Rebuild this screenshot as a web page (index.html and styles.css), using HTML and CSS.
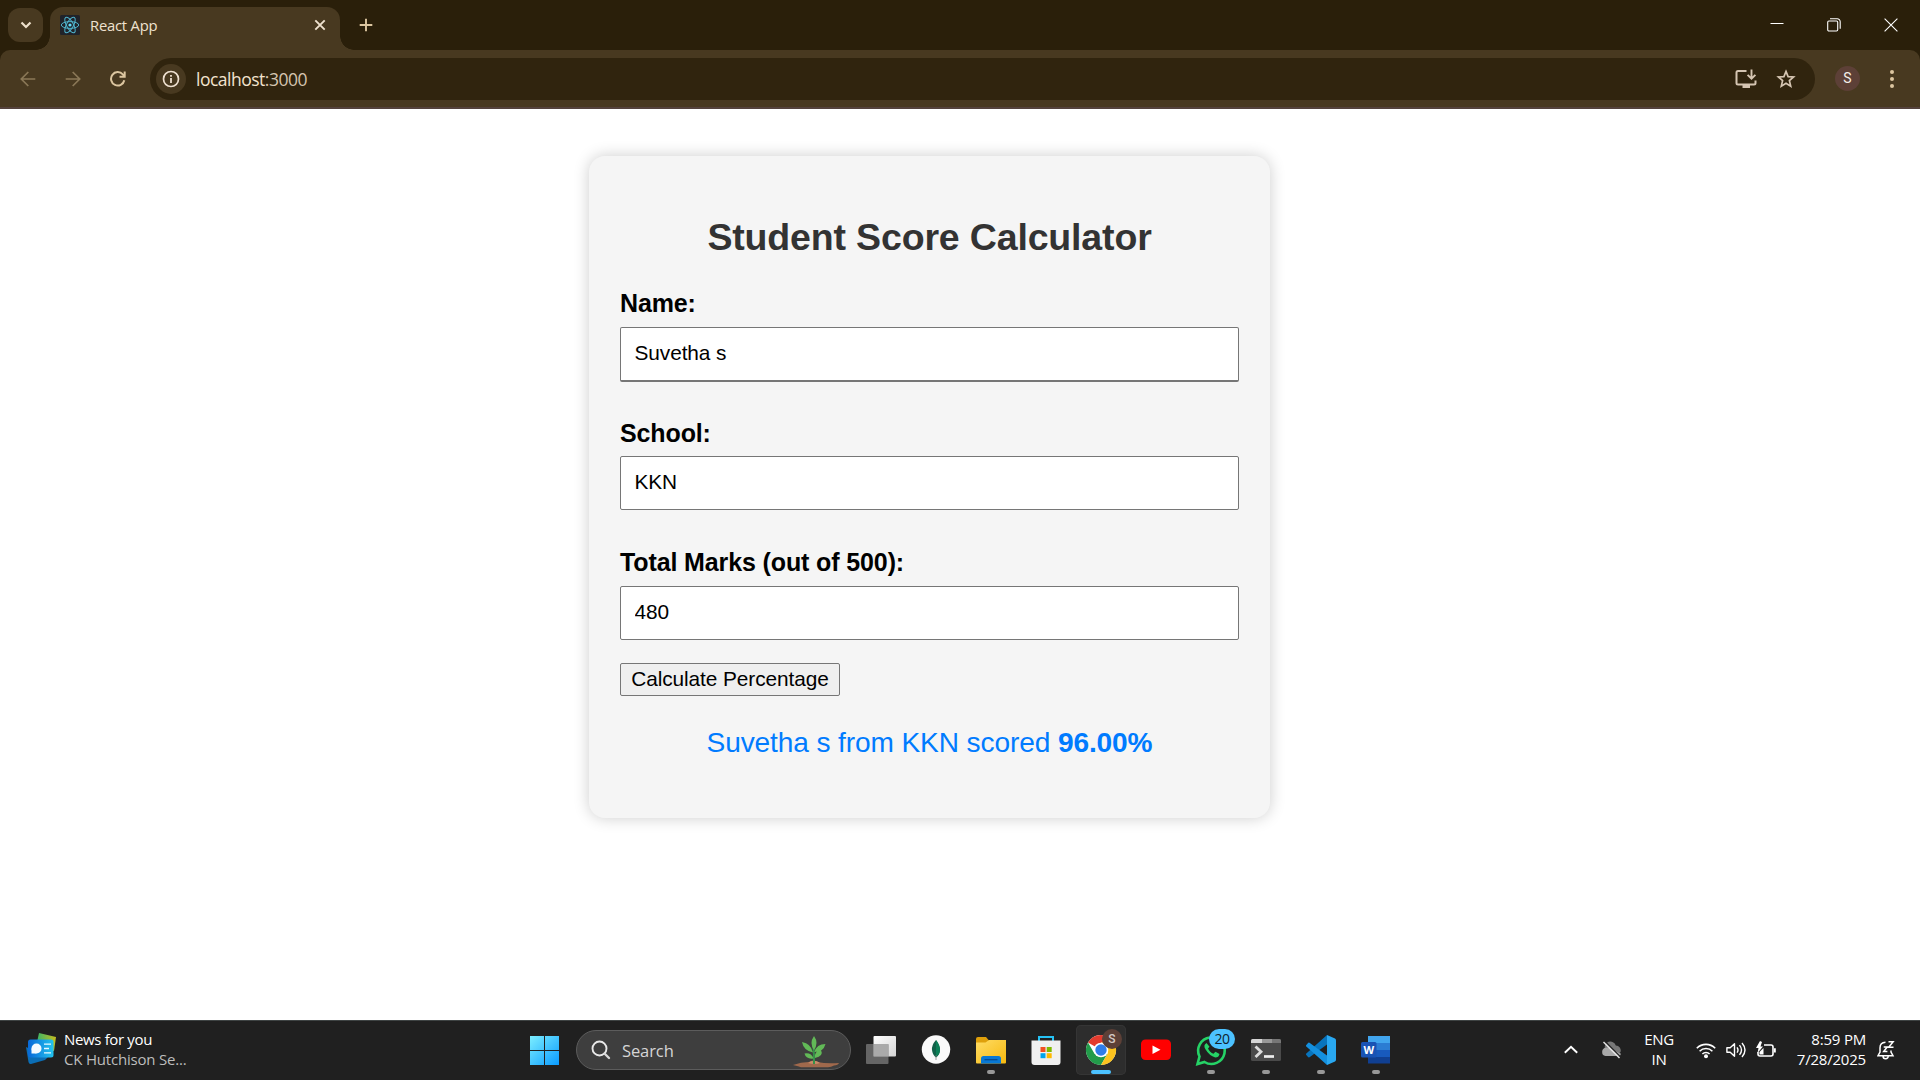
FILE: index.html
```html
<!DOCTYPE html>
<html lang="en">
<head>
<meta charset="utf-8">
<title>React App</title>
<link rel="stylesheet" href="styles.css">
</head>
<body>
<div class="screen">
  <header class="tabstrip">
    <button class="tab-search" aria-label="Search tabs"><svg width="35" height="34" viewBox="0 0 35 34"><path d="M13.5 14.5l4.5 4.5 4.5-4.5" fill="none" stroke="#eee0cb" stroke-width="2.2"/></svg></button>
    <div class="tab">
      <svg class="favicon" width="20" height="20" viewBox="0 0 20 20"><rect width="20" height="20" rx="1.5" fill="#20232a"/><g fill="none" stroke="#4fb3cc" stroke-width="1"><ellipse cx="10" cy="10" rx="8.7" ry="3.4"/><ellipse cx="10" cy="10" rx="8.7" ry="3.4" transform="rotate(60 10 10)"/><ellipse cx="10" cy="10" rx="8.7" ry="3.4" transform="rotate(120 10 10)"/></g><circle cx="10" cy="10" r="1.6" fill="#61dafb"/></svg>
      <span class="tab-title">React App</span>
      <svg class="tab-close" width="12" height="12" viewBox="0 0 12 12"><path d="M1.3 1.3l9.4 9.4M10.7 1.3l-9.4 9.4" stroke="#efe2cf" stroke-width="1.9"/></svg>
    </div>
    <svg class="new-tab" width="14" height="14" viewBox="0 0 14 14"><path d="M7 .7v12.6M.7 7h12.6" stroke="#dcc6a0" stroke-width="1.9"/></svg>
    <div class="window-controls">
      <svg width="14" height="14" viewBox="0 0 14 14"><path d="M.5 5.500h13" stroke="#fff" stroke-width="1"/></svg>
      <svg width="14" height="14" viewBox="0 0 14 14"><g fill="none" stroke="#fff" stroke-width="1.1"><rect x=".7" y="3" width="10" height="10" rx="1.2"/><path d="M3 .8h7.200a3 3 0 0 1 3 3v7"/></g></svg>
      <svg width="14" height="14" viewBox="0 0 14 14"><path d="M.6.6l12.800 12.800M13.400.6L.6 13.400" stroke="#fff" stroke-width="1.1"/></svg>
    </div>
  </header>
  <nav class="toolbar">
    <svg class="nav-icon" width="16" height="16" viewBox="0 0 16 16"><path d="M15.300 8H1.500M8.300 1L1.300 8l7 7" fill="none" stroke="#8a7857" stroke-width="1.7"/></svg>
    <svg class="nav-icon" width="16" height="16" viewBox="0 0 16 16"><path d="M.7 8h13.800M7.700 1l7 7-7 7" fill="none" stroke="#8a7857" stroke-width="1.7"/></svg>
    <svg class="nav-icon" width="16" height="16" viewBox="0 0 16 16"><path d="M14.300 9.200A6.700 6.700 0 1 1 12.800 3.400L14.300 5M14.700.5V5.700H9.500" fill="none" stroke="#dcc6a0" stroke-width="2"/></svg>
    <div class="omnibox">
      <span class="site-info"><svg width="18" height="18" viewBox="0 0 18 18"><circle cx="9" cy="9" r="7.500" fill="none" stroke="#eee0d0" stroke-width="1.700"/><path d="M9 8v5M9 4.900v1.900" stroke="#eee0d0" stroke-width="1.800"/></svg></span>
      <span class="url">localhost<span class="port">:3000</span></span>
      <svg class="install" width="22" height="20" viewBox="0 0 22 20"><path d="M11.500 2H3Q1.500 2 1.500 3.500V14q0 1.500 1.500 1.500h16q1.500 0 1.500-1.500V11.500" fill="none" stroke="#d5c5b2" stroke-width="2"/><path d="M7.500 15.500h7.500V19H7.500z" fill="#d5c5b2"/><path d="M16.500.5V9M12.600 5.800l3.900 3.900 3.900-3.900" fill="none" stroke="#d5c5b2" stroke-width="1.900"/></svg>
      <svg class="star" width="20" height="20" viewBox="0 0 20 20"><path d="M10 2.400l2.100 5.200 5.500.4-4.200 3.600 1.300 5.500L10 14.200l-4.700 2.900 1.300-5.500L2.400 8l5.500-.4z" fill="none" stroke="#d5c5b2" stroke-width="1.700"/></svg>
    </div>
    <span class="avatar">S</span>
    <svg class="menu" width="6" height="20" viewBox="0 0 6 20"><g fill="#dcc6a0"><circle cx="3" cy="3" r="2"/><circle cx="3" cy="10" r="2"/><circle cx="3" cy="17" r="2"/></g></svg>
  </nav>

  <main class="page">
    <section class="card">
      <h2 class="heading">Student Score Calculator</h2>
      <label class="label" for="name">Name:</label>
      <input class="input input-name" id="name" type="text" value="Suvetha s">
      <label class="label" for="school">School:</label>
      <input class="input" id="school" type="text" value="KKN">
      <label class="label" for="marks">Total Marks (out of 500):</label>
      <input class="input input-marks" id="marks" type="text" value="480">
      <button class="calculate">Calculate Percentage</button>
      <p class="result">Suvetha s from KKN scored <strong>96.00%</strong></p>
    </section>
  </main>

  <footer class="taskbar">
    <div class="widgets">
      <svg width="30" height="32" viewBox="0 0 30 32"><defs><linearGradient id="wg" x1="0" x2="1"><stop offset="0" stop-color="#35b56b"/><stop offset="1" stop-color="#c5bd20"/></linearGradient><linearGradient id="wb" x1="0" x2="1"><stop offset="0" stop-color="#0868d8"/><stop offset="1" stop-color="#23c3ee"/></linearGradient></defs><path d="M13 0l17 4-2 14-18-4z" fill="url(#wg)"/><path d="M0 14l22 10-3 3-14 4q-2 .4-2.500-2z" fill="#0b6eb5"/><rect x="2" y="6.500" width="25.500" height="18" rx="2.500" fill="url(#wb)"/><circle cx="10.500" cy="15.500" r="5" fill="#f4fbff"/><path d="M5.500 15.500v5h5z" fill="#f4fbff"/><path d="M18 11.200h7M18 15.500h5M18 19.800h7" stroke="#e8faff" stroke-width="1.300"/></svg>
      <div class="news"><span>News for you</span><span class="news-sub">CK Hutchison Se...</span></div>
    </div>
    <div class="apps">
      <svg width="50" height="50" viewBox="0 0 50 50"><defs><linearGradient id="win" x1="11" y1="11" x2="40" y2="40" gradientUnits="userSpaceOnUse"><stop offset="0" stop-color="#7ceeff"/><stop offset="1" stop-color="#0a9bff"/></linearGradient></defs><path d="M11 11h14v14H11zM26 11h14v14H26zM11 26h14v14H11zM26 26h14v14H26z" fill="url(#win)"/></svg>
      <div class="search">
        <svg width="20" height="20" viewBox="0 0 20 20"><circle cx="8.500" cy="8.500" r="7" fill="none" stroke="#e8e8e8" stroke-width="1.900"/><path d="M13.500 13.500l4.500 4.500" stroke="#d8d8d8" stroke-width="2.400" stroke-linecap="round"/></svg>
        <span class="search-text">Search</span>
        <svg class="plant" width="48" height="34" viewBox="0 0 48 34"><path d="M1 30q8-3 16-3 4-3 8 0 10 2 22 1-1 2-5 2.500-3 1.500-6 1.800H9l-3-1z" fill="#a0694c"/><path d="M16 28q6-4.500 12 0-5 2-12 0z" fill="#c98b68"/><path d="M22 29q0-12-.5-18" stroke="#35914a" stroke-width="2" fill="none"/><path d="M22 15q-5-7 0-14 5 7 0 14zM21 17.500q-9.500-2-11-10.500 9 1.500 11 10.500zM22.500 17q2-8 11-8-2 8-11 8zM21.500 23.500q-7.500 1-9-5 7-1 9 5zM23 23q-1-7 6-8 3 6-6 8z" fill="#62b957"/></svg>
      </div>
      <svg width="50" height="50" viewBox="0 0 50 50"><defs><linearGradient id="tv" x1="0" y1="0" x2="1" y2="1"><stop offset="0" stop-color="#fff"/><stop offset="1" stop-color="#d4d4d4"/></linearGradient></defs><rect x="17.500" y="11" width="22.500" height="20.500" rx="1" fill="url(#tv)"/><rect x="10" y="19" width="22.500" height="20" rx="1" fill="#777" fill-opacity=".8"/><path d="M17.500 19h15v12.500h-15z" fill="#aaa"/></svg>
      <svg width="50" height="50" viewBox="0 0 50 50"><circle cx="25" cy="24.500" r="14.200" fill="#fafafa"/><path d="M25 15q-4.500 5-4 10t4 7.500q4-3 4-7.500t-4-10z" fill="#116149"/><path d="M25 15v17q4-3 4-7.500t-4-9.500z" fill="#0b8057"/><path d="M25 30v5" stroke="#777" stroke-width=".7"/></svg>
      <div class="app"><svg width="50" height="50" viewBox="0 0 50 50"><defs><linearGradient id="fd" x1="0" y1="0" x2="1" y2="1"><stop offset="0" stop-color="#ffdc65"/><stop offset="1" stop-color="#f6b90e"/></linearGradient></defs><path d="M10 14q0-2 2-2h8l3 3.500L20 20H10z" fill="#dfa00b"/><path d="M10 17.500h9.500l3.500-2.500h17v22.500q0 1-1 1H11q-1 0-1-1z" fill="url(#fd)"/><path d="M15 38.500V33.500q0-2.500 2.500-2.500h15q2.500 0 2.500 2.500v5z" fill="#0878d4"/><path d="M18.500 34.700h13" stroke="#064a91" stroke-width="1.300"/></svg><i class="dot"></i></div>
      <svg width="50" height="50" viewBox="0 0 50 50"><path d="M18 17v-5h14v5" fill="none" stroke="#25c2f5" stroke-width="2"/><path d="M10.500 15.500h29V37q0 3-3 3h-23q-3 0-3-3z" fill="#f0f0f0"/><path d="M19.500 22h5v5h-5z" fill="#f25022"/><path d="M25.700 22h5v5h-5z" fill="#7fba00"/><path d="M19.500 28.200h5v5h-5z" fill="#00a4ef"/><path d="M25.700 28.200h5v5h-5z" fill="#ffb900"/></svg>
      <div class="app app-active"><svg width="50" height="50" viewBox="0 0 50 50"><circle cx="25" cy="25" r="15" fill="#fff"/><path d="M25 25L12 17.500A15 15 0 0 1 38 17.500H25z" fill="#e33b2e"/><path d="M12 17.500A15 15 0 0 0 25 40l6.500-11.250L25 25l-6.500 3.750z" fill="#229b4a"/><path d="M38 17.500A15 15 0 0 1 25 40l6.500-11.250Q33 22 25 17.500z" fill="#fcc31e"/><circle cx="25" cy="25" r="7.300" fill="#fff"/><circle cx="25" cy="25" r="5.700" fill="#2f7de9"/></svg><span class="profile-badge">S</span><i class="dot dot-active"></i></div>
      <svg width="50" height="50" viewBox="0 0 50 50"><rect x="10" y="14.500" width="30" height="20.500" rx="4.500" fill="#f00"/><path d="M21.500 20.500v8.500l8-4.250z" fill="#fff"/></svg>
      <div class="app"><svg width="50" height="50" viewBox="0 0 50 50"><path d="M11.500 39l2-7.500A13.300 13.300 0 1 1 18.500 37z" fill="none" stroke="#25d366" stroke-width="2.600"/><path d="M20.500 18q-3.500 2-1.200 6 4 6.800 10 8.500 3.500 0 4.200-3.500l-4-2.200-2 2q-3.700-1.200-5.500-5.300l1.500-1.700z" fill="#25d366"/></svg><span class="count-badge">20</span><i class="dot"></i></div>
      <div class="app"><svg width="50" height="50" viewBox="0 0 50 50"><rect x="10" y="14" width="30" height="22" rx="1.500" fill="#4a4a4a"/><path d="M10 18v-2.500q0-1.500 1.500-1.500H21v4z" fill="#d5d5d5"/><path d="M21 14h10v4H21z" fill="#999"/><path d="M31 14h7.500q1.500 0 1.500 1.500V18h-9z" fill="#777"/><path d="M14.500 21.500l5.500 5.300-5.500 5.300" fill="none" stroke="#dcdcdc" stroke-width="2.800"/><path d="M23 31.500h10" stroke="#eee" stroke-width="2.700"/></svg><i class="dot"></i></div>
      <div class="app"><svg width="50" height="50" viewBox="0 0 50 50"><path d="M10.300 28.500L31 10l2 8-19.500 14.300q-1 .4-1.700-.5l-1.700-2q-.4-.8.200-1.300z" fill="#0874bd"/><path d="M10.300 21.500L31 40l2-8-19.500-14.300q-1-.4-1.700.5l-1.700 2q-.4.8.2 1.300z" fill="#1490df"/><path d="M31 10l8 3.500q1 .5 1 1.800v19.400q0 1.300-1 1.800L31 40z" fill="#29a8f1"/></svg><i class="dot"></i></div>
      <div class="app"><svg width="50" height="50" viewBox="0 0 50 50"><path d="M17 11h22v7H17z" fill="#41a5ee"/><path d="M17 18h22v7H17z" fill="#2b7cd3"/><path d="M17 25h22v7H17z" fill="#185abd"/><path d="M17 32h22v6.500H17z" fill="#103f91"/><rect x="10" y="17" width="15.500" height="15.500" rx="1.500" fill="#1953b4"/><text class="word-letter" x="17.700" y="29" text-anchor="middle">W</text></svg><i class="dot"></i></div>
    </div>
    <div class="tray">
      <svg class="tray-up" width="14" height="9" viewBox="0 0 14 9"><path d="M.8 7.800L7 1.800l6.200 6" fill="none" stroke="#fff" stroke-width="1.900"/></svg>
      <svg class="tray-cloud" width="20" height="18" viewBox="0 0 20 18"><path d="M4 8a5.500 5.500 0 0 1 10.800-3.500A5 5 0 0 1 19.500 11l-3 3z" fill="#777"/><path d="M4.500 15A4.200 4.200 0 0 1 5 6.700q3-.7 6 2l9 4q-.5 2.500-3 2.300z" fill="#a8a8a8"/><path d="M3.700 0l16 16" stroke="#222" stroke-width="1.300"/><path d="M2.500 1l16 16" stroke="#e6e6e6" stroke-width="1.500"/></svg>
      <div class="lang"><span>ENG</span><span>IN</span></div>
      <div class="status">
        <svg width="20" height="18" viewBox="0 0 20 18"><g fill="none" stroke="#fff" stroke-width="1.600"><path d="M.8 7.200a13 13 0 0 1 18.400 0M3.600 10.200a9 9 0 0 1 12.800 0M6.400 13a5.100 5.100 0 0 1 7.200 0"/></g><circle cx="10" cy="15.200" r="2" fill="#fff"/></svg>
        <svg width="20" height="18" viewBox="0 0 20 18"><g fill="none" stroke="#fff" stroke-width="1.400"><path d="M.9 6.800h3.300L8.500 2.700v12.600l-4.300-4.100H.9z" stroke-linejoin="round"/><path d="M11 6.300q2 2.700 0 5.400M13.500 4.100q4 4.900 0 9.800M16 2q6 7 0 14"/></g></svg>
        <svg width="20" height="18" viewBox="0 0 20 18"><path d="M8 4h7q2 0 2 2v7q0 2-2 2H4q-2 0-2-2v-2" fill="none" stroke="#fff" stroke-width="1.600"/><path d="M18 7.300h1.800v4.200H18zM4 0L0 7h2.500L1.500 12 7 5.500H4.500L6 1zM3.500 13.500V11L7.500 7v6.500z" fill="#fff"/></svg>
      </div>
      <div class="clock"><span>8:59 PM</span><span>7/28/2025</span></div>
      <svg class="bell" width="18" height="20" viewBox="0 0 18 20"><path d="M8.500 2.300Q3 2.500 3 8v4L1 15.700h15L14 12v-1.500M6 16q0 2.800 2.600 2.800T11.200 16" fill="none" stroke="#fff" stroke-width="1.500"/><path d="M11.500 1.700h4.600L11.700 7.200h4.800M6.700 7h3.500l-3.500 4.500h3.700" fill="none" stroke="#fff" stroke-width="1.500"/></svg>
    </div>
  </footer>
</div>
</body>
</html>
```

FILE: styles.css
```css
* { box-sizing: border-box; }

body {
  margin: 0;
  background: #fff;
  font-family: "Liberation Sans", Arial, sans-serif;
}

svg { display: block; flex: none; }

.screen {
  display: flex;
  flex-direction: column;
  width: 1920px;
  height: 1080px;
  overflow: hidden;
  background: #2a1f0a;
}

/* Browser chrome */
.tabstrip,
.toolbar,
.taskbar {
  font-family: "Open Sans", "Noto Sans", sans-serif;
}

.tabstrip {
  display: flex;
  align-items: flex-start;
  height: 50px;
  background: #2a1f0a;
  flex: none;
}

.tab-search {
  width: 35px;
  height: 34px;
  margin: 8px 0 0 8px;
  padding: 0;
  border: 0;
  border-radius: 12px;
  background: #483920;
}

.tab {
  position: relative;
  display: flex;
  align-items: center;
  width: 290px;
  height: 43px;
  margin: 7px 0 0 7px;
  padding: 0 14px 7px 10px;
  border-radius: 13px 13px 0 0;
  background: #483920;
}

.tab::before,
.tab::after {
  content: "";
  position: absolute;
  bottom: 0;
  width: 14px;
  height: 14px;
}

.tab::before {
  left: -14px;
  background: radial-gradient(circle at 0 0, transparent 13.5px, #483920 14px);
}

.tab::after {
  right: -14px;
  background: radial-gradient(circle at 100% 0, transparent 13.5px, #483920 14px);
}

.tab-title {
  margin-left: 10px;
  color: #efe2cf;
  font-size: 14.8px;
  line-height: 20px;
  letter-spacing: -0.22px;
}

.tab-close { margin-left: auto; }

.new-tab { margin: 18px 0 0 19px; }

.window-controls {
  display: flex;
  gap: 43px;
  margin: 18px 22px 0 auto;
}

.toolbar {
  display: flex;
  align-items: center;
  height: 59px;
  padding: 1px 25px 0 20px;
  border-bottom: 2px solid #54423c;
  border-radius: 10px 10px 0 0;
  background: #483920;
  flex: none;
}

.nav-icon { margin: 0 29px 1px 0; }

.omnibox {
  display: flex;
  align-items: center;
  width: 1665px;
  height: 42px;
  margin-left: -5px;
  padding: 0 19px 0 6px;
  border-radius: 21px;
  background: #30240e;
}

.site-info {
  display: grid;
  place-items: center;
  width: 30px;
  height: 30px;
  border-radius: 50%;
  background: #483920;
}

.url {
  margin-left: 10px;
  padding-bottom: 1px;
  color: #f3e3ce;
  font-size: 17.5px;
  line-height: 24px;
  letter-spacing: -0.5px;
}

.port { color: #d5c5b0; }

.install { margin-left: auto; }

.star { margin-left: 19px; }

.avatar {
  width: 25px;
  height: 25px;
  margin: 0 0 1px 20px;
  border-radius: 50%;
  background: #5d4037;
  color: #f5eee9;
  font: 14px/25px Roboto, sans-serif;
  text-align: center;
}

.menu { margin: 0 0 1px auto; }

.page {
  flex: 1;
  min-height: 0;
  background: #fff;
}

/* Calculator */
.card {
  display: flex;
  flex-direction: column;
  align-items: flex-start;
  width: 681px;
  height: 662px;
  margin: 47px 0 0 589px;
  padding: 59px 31px 0;
  border-radius: 16px;
  background: #f5f5f5;
  box-shadow: 0 0 16px rgba(0, 0, 0, 0.2);
}

.heading {
  align-self: stretch;
  margin: 0 0 30px;
  color: #333;
  font-size: 37.5px;
  line-height: 44px;
  letter-spacing: -0.16px;
  text-align: center;
}

.label {
  font-size: 25px;
  font-weight: bold;
  line-height: 29px;
  letter-spacing: -0.12px;
}

.input {
  width: 619px;
  height: 54px;
  margin: 8px 0 38px;
  padding: 0 14px 2px 13.5px;
  border: 1px solid #767676;
  border-radius: 2px;
  background: #fff;
  color: #000;
  font: 20.83px "Liberation Sans", Arial, sans-serif;
  letter-spacing: -0.08px;
}

.input-name {
  height: 55px;
  margin: 9px 0 37px;
  border-bottom-width: 2px;
}

.input-marks { margin-top: 9px; }

.calculate {
  width: 220px;
  height: 33px;
  margin-top: -15px;
  padding: 0 0 1px;
  border: 1px solid #767676;
  border-radius: 2px;
  background: #efefef;
  color: #000;
  font: 20.83px "Liberation Sans", Arial, sans-serif;
  letter-spacing: -0.08px;
  white-space: nowrap;
}

.result {
  align-self: stretch;
  margin: 31px 0 0;
  color: #007bff;
  font-size: 28.1px;
  line-height: 32px;
  letter-spacing: -0.12px;
  text-align: center;
}

/* Taskbar */
.taskbar {
  display: grid;
  grid-template-columns: 519px auto 1fr;
  height: 60px;
  border-top: 1px solid #3e4343;
  background: #202020;
  color: #fff;
  font-size: 15px;
  line-height: 20px;
  flex: none;
}

.widgets {
  display: flex;
  align-items: center;
  gap: 8px;
  padding: 0 0 3px 26px;
}

.news,
.lang,
.clock {
  display: flex;
  flex-direction: column;
  margin-bottom: 1px;
  letter-spacing: -0.35px;
}

.news-sub {
  color: #bdbdbd;
  letter-spacing: -0.2px;
}

.apps {
  display: flex;
  align-items: center;
  gap: 5px;
  padding-bottom: 1px;
}

.search {
  display: flex;
  align-items: center;
  width: 275px;
  height: 40px;
  margin-left: 2px;
  padding: 0 10px 0 14px;
  border: 1px solid #5c5c5c;
  border-radius: 20px;
  background: #3e3e3e;
}

.search-text {
  margin-left: 11px;
  padding-top: 1px;
  color: #d5d5d5;
  font-size: 16.5px;
  letter-spacing: -0.1px;
}

.plant {
  align-self: flex-end;
  margin-left: auto;
}

.app {
  position: relative;
  width: 50px;
  height: 50px;
}

.app-active {
  border-radius: 5px;
  background: #2d2d2d;
  box-shadow: inset 0 0 0 1px #353535;
}

.dot {
  position: absolute;
  bottom: 1px;
  left: 21px;
  width: 8px;
  height: 4px;
  border-radius: 2px;
  background: #989898;
}

.dot-active {
  left: 15px;
  width: 20px;
  background: #4cc2ff;
}

.profile-badge,
.count-badge {
  position: absolute;
  display: grid;
  place-items: center;
}

.profile-badge {
  top: 4px;
  right: 4px;
  width: 20px;
  height: 20px;
  border-radius: 50%;
  background: #5d4037;
  color: #d3c9c5;
  font: 500 12px Roboto, sans-serif;
}

.count-badge {
  top: 4px;
  right: 1px;
  width: 26px;
  height: 20px;
  border-radius: 10px;
  background: #4cc2ff;
  color: #10222c;
  font-size: 14px;
  letter-spacing: -0.5px;
}

.word-letter {
  fill: #fff;
  font: bold 11px "Open Sans", sans-serif;
}

.tray {
  display: flex;
  align-items: center;
  justify-content: flex-end;
  padding: 0 25px 2px 0;
}

.tray-cloud { margin-left: 23px; }

.lang {
  align-items: center;
  width: 32px;
  margin-left: 22px;
}

.status {
  display: flex;
  gap: 10px;
  margin-left: 21px;
}

.clock {
  align-items: flex-end;
  width: 74px;
  margin-left: 16px;
  letter-spacing: -0.2px;
}

.bell { margin-left: 11px; }
```
